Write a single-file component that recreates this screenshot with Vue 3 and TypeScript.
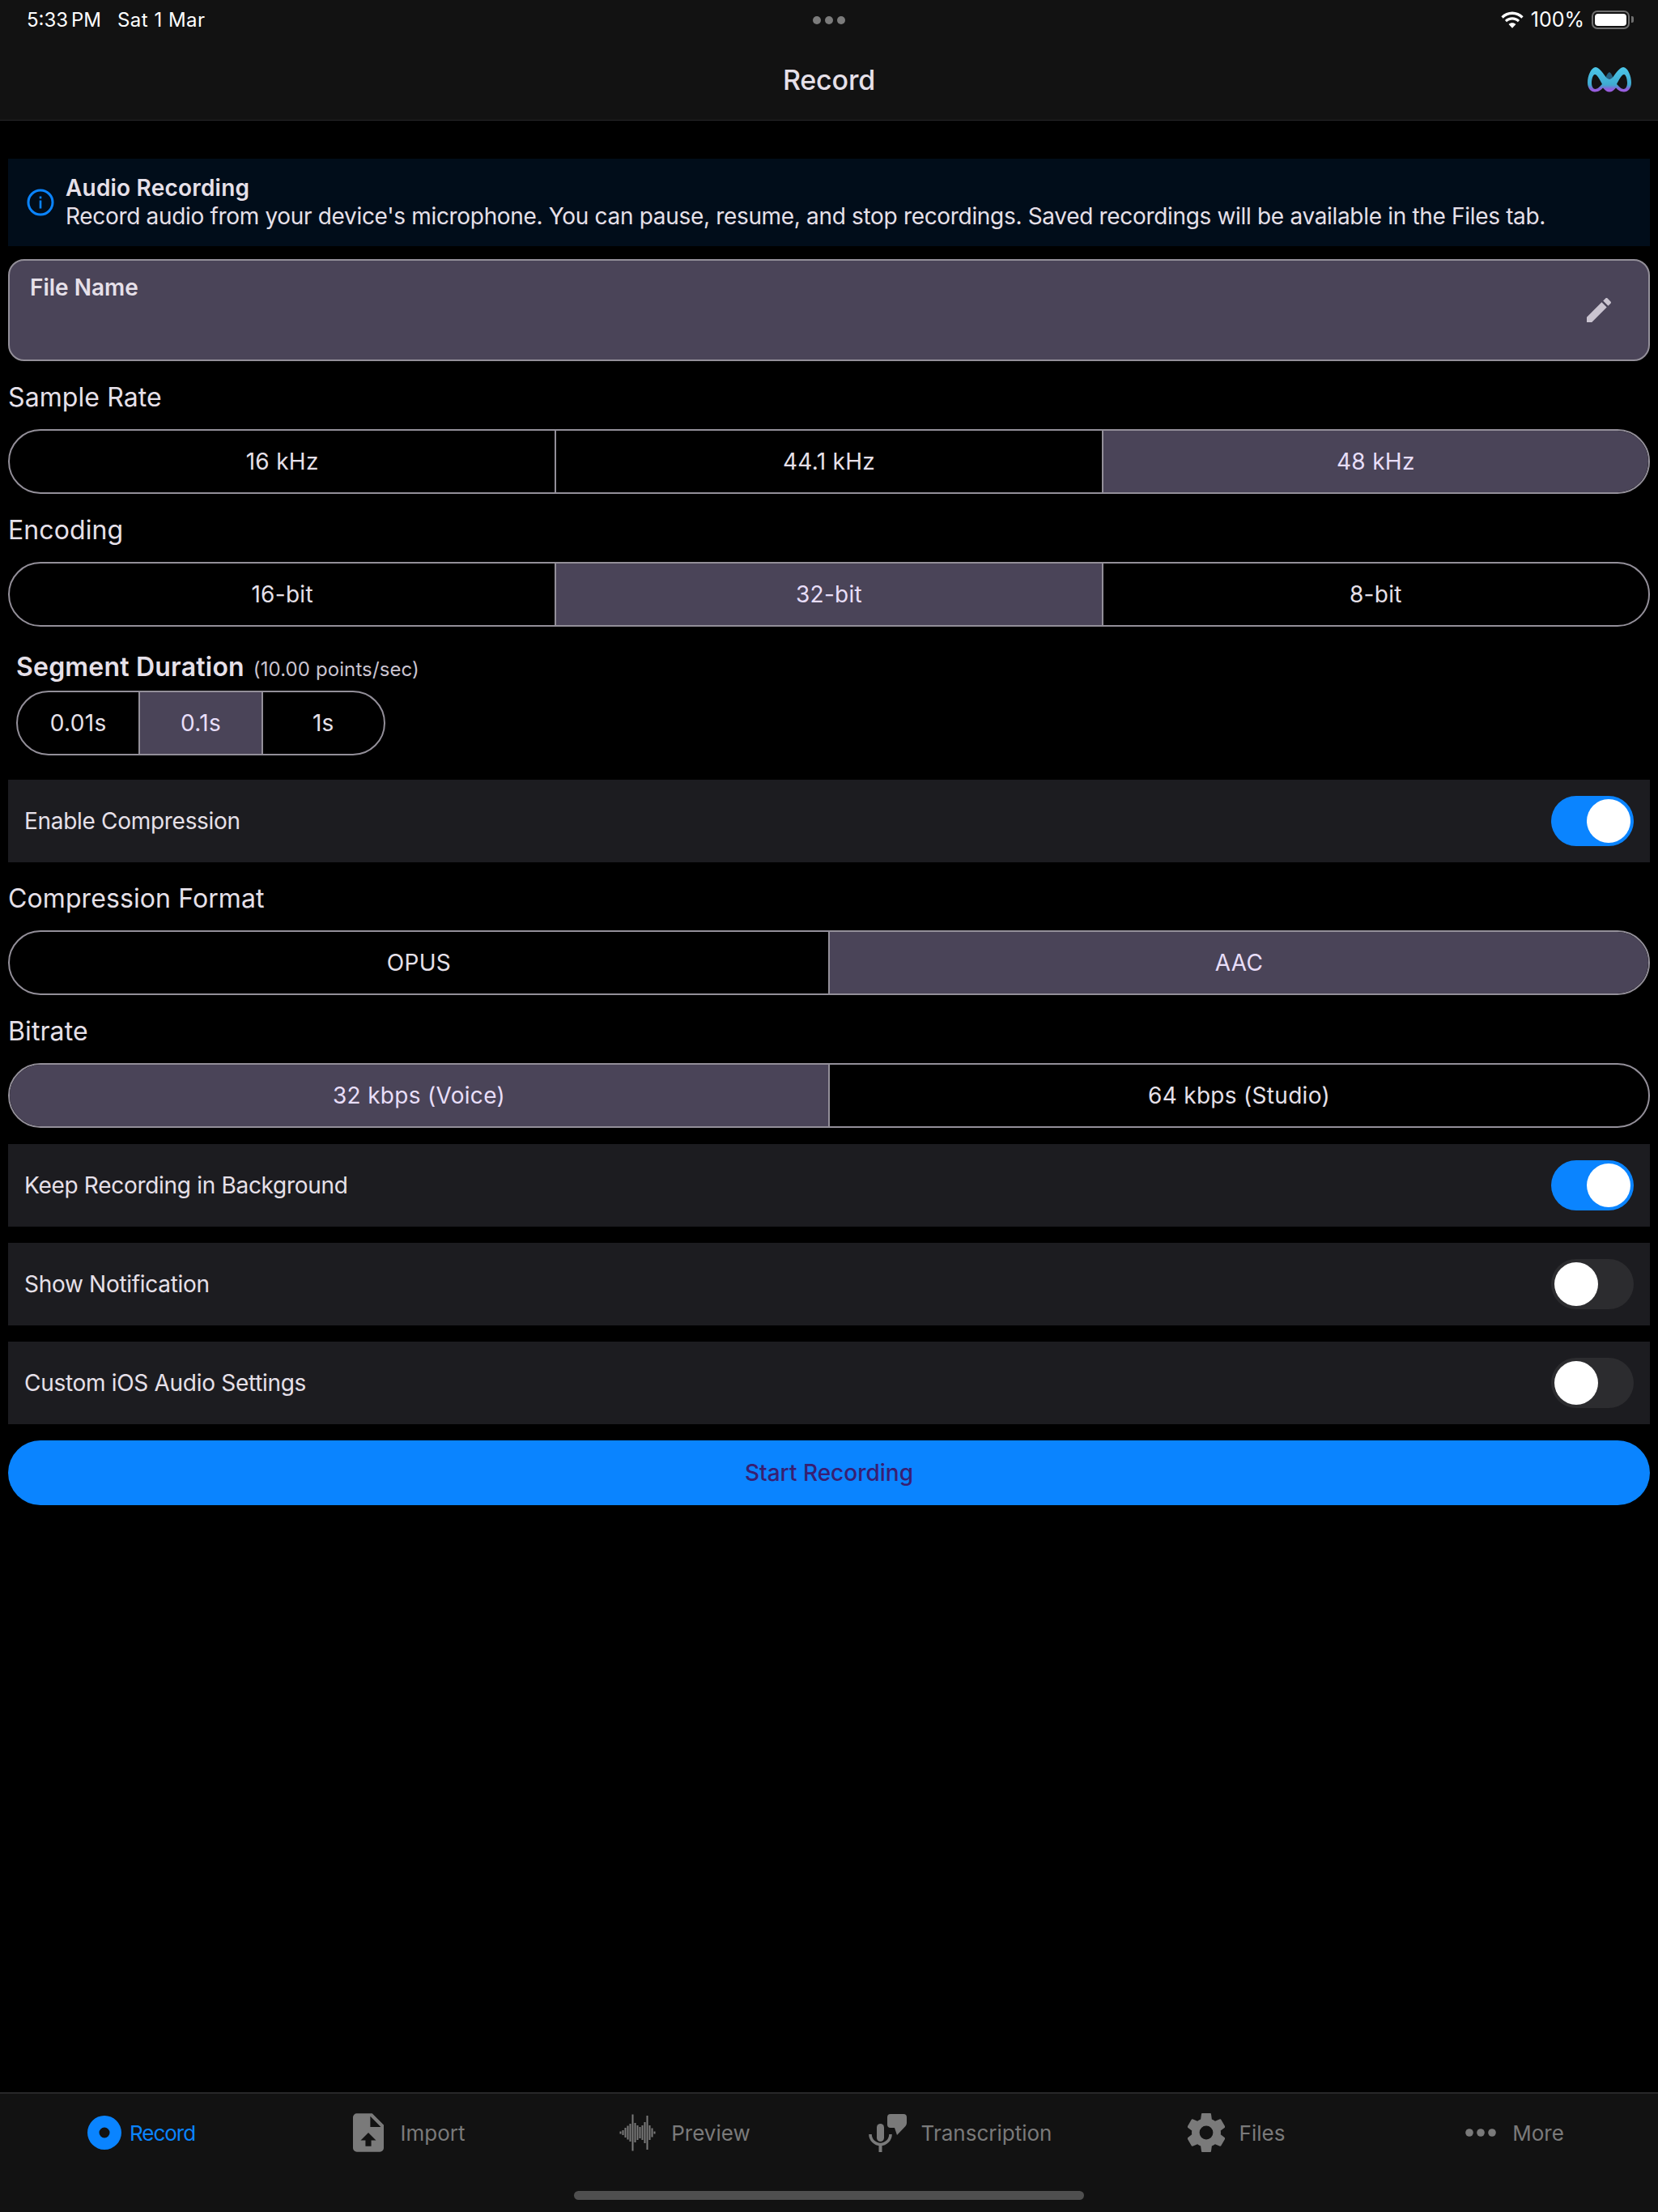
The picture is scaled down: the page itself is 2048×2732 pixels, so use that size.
<template>
  <div class="page">
    <header class="top">
      <div class="status">
        <div class="status-left"><span class="time">5:33 PM</span><span class="date">Sat 1 Mar</span></div>
        <div class="dots"><i></i><i></i><i></i></div>
        <div class="status-right">
          <svg class="wifi" width="28" height="21" viewBox="2 1 24 18.500">
            <path d="M14 4.600c3.900 0 7.400 1.500 10 4l2-2.100C22.800 3.400 18.600 1.500 14 1.500S5.200 3.400 2 6.500l2 2.100c2.600-2.500 6.100-4 10-4z" fill="#fff" />
            <path d="M14 10.300c2.300 0 4.400.9 6 2.400l2-2.100c-2.100-2-5-3.200-8-3.200s-5.900 1.200-8 3.200l2 2.100c1.600-1.500 3.700-2.400 6-2.400z" fill="#fff" />
            <path d="M14 13.500c-1.500 0-2.900.6-3.900 1.600l3.900 4.200 3.900-4.200c-1-1-2.400-1.600-3.900-1.600z" fill="#fff" />
          </svg>
          <span class="pct">100%</span>
          <div class="battery"><div class="battery-fill"></div></div>
          <div class="battery-cap"></div>
        </div>
      </div>
      <div class="nav">
        <span class="nav-title">Record</span>
        <svg class="logo" width="54" height="31" viewBox="0 0 54 31">
          <defs>
            <linearGradient id="lg" x1="0" y1="0" x2="0" y2="1">
              <stop offset="0" stop-color="#4cc8ea" />
              <stop offset="0.72" stop-color="#3fa9d0" />
              <stop offset="0.88" stop-color="#8a5fd8" />
              <stop offset="1" stop-color="#a45fe6" />
            </linearGradient>
          </defs>
          <path d="M27 6C23 9 20 15 24 20c2 2.500 4 2.500 6 0 3-5 1-11-3-14z" fill="#25607f" />
          <path d="M27 13c-1.500 1.500-3 3.500-2 5 1 1 3 .5 4-1s.5-3-2-4z" fill="#2d4468" />
          <path fill="url(#lg)" fill-rule="evenodd" d="M9.500 0C4 1 0 11 0 19c0 7 4 11.500 9 11.500 5 0 8-3 10-5 2.500 3 5 5 8 5s5.500-2 8-5c2 2 5 5 10 5s9-4.500 9-11.500c0-8-4-18-9.500-19C40 0 36 6 31.500 12 29 15.500 25 15.500 22.500 12 18 6 14 0 9.500 0zM9 9C12 9 16 17 18 21 15 24 12 27 9.500 27 7 27 5 24 5 19.500 5 15 6.500 9 9 9zM45 9c2.500 0 4 6 4 10.500S47 27 44.500 27C42 27 39 24 36 21 38 17 42 9 45 9z" />
        </svg>
      </div>
    </header>

    <main class="content">
      <div class="banner">
        <svg class="info" width="34" height="34" viewBox="0 0 34 34">
          <circle cx="17" cy="17" r="15" fill="none" stroke="#0a84ff" stroke-width="3" />
          <rect x="15.700" y="14.500" width="2.600" height="10" fill="#0a84ff" />
          <rect x="15.700" y="9.500" width="2.600" height="2.800" fill="#0a84ff" />
        </svg>
        <div>
          <div class="banner-title">Audio Recording</div>
          <div class="banner-text">Record audio from your device's microphone. You can pause, resume, and stop recordings. Saved recordings will be available in the Files tab.</div>
        </div>
      </div>

      <div class="field">
        <span class="field-label">File Name</span>
        <svg class="pencil" width="40" height="40" viewBox="0 0 24 24">
          <path d="M3 17.250V21h3.750L17.810 9.940l-3.750-3.750L3 17.250zM20.710 7.040c.39-.39.39-1.020 0-1.410l-2.340-2.340c-.39-.39-1.020-.39-1.410 0l-1.830 1.830 3.750 3.750 1.830-1.830z" fill="#cac4d0" />
        </svg>
      </div>

      <div class="label">Sample Rate</div>
      <div class="seg">
        <button v-for="o in sampleRates" :key="o" :class="{ on: o === '48 kHz' }">{{ o }}</button>
      </div>

      <div class="label">Encoding</div>
      <div class="seg">
        <button v-for="o in encodings" :key="o" :class="{ on: o === '32-bit' }">{{ o }}</button>
      </div>

      <div class="duration">
        <div class="duration-head">
          <span class="duration-title">Segment Duration</span>
          <span class="duration-sub">(10.00 points/sec)</span>
        </div>
        <div class="seg small">
          <button v-for="o in durations" :key="o" :class="{ on: o === '0.1s' }">{{ o }}</button>
        </div>
      </div>

      <div class="row">
        <span>Enable Compression</span>
        <div class="toggle on"><div class="knob"></div></div>
      </div>

      <div class="label">Compression Format</div>
      <div class="seg">
        <button>OPUS</button>
        <button class="on">AAC</button>
      </div>

      <div class="label">Bitrate</div>
      <div class="seg">
        <button class="on">32 kbps (Voice)</button>
        <button>64 kbps (Studio)</button>
      </div>

      <div v-for="r in rows" :key="r.label" class="row spaced">
        <span>{{ r.label }}</span>
        <div class="toggle" :class="{ on: r.on }"><div class="knob"></div></div>
      </div>

      <button class="start">Start Recording</button>
    </main>

    <nav class="tabs">
      <div class="tab active">
        <svg width="42" height="42" viewBox="0 0 42 42"><path fill="#0a84ff" fill-rule="evenodd" d="M21 0a21 21 0 1 0 0 42a21 21 0 1 0 0-42zM21 14.500a6.500 6.500 0 1 1 0 13a6.500 6.500 0 1 1 0-13z" /></svg>
        <span>Record</span>
      </div>
      <div class="tab">
        <svg width="38" height="48" viewBox="4 2 16 20"><path fill="#7a7a7a" d="M14,2H6A2,2 0 0,0 4,4V20A2,2 0 0,0 6,22H18A2,2 0 0,0 20,20V8L14,2M13.500,16V19H10.500V16H8L12,12L16,16H13.500M13,9V3.500L18.500,9H13Z" /></svg>
        <span>Import</span>
      </div>
      <div class="tab">
        <svg width="46" height="46" viewBox="0 0 46 46">
          <line v-for="(h, i) in wave" :key="i" :x1="1.500 + i * 3" :x2="1.500 + i * 3" :y1="23 - h / 2" :y2="23 + h / 2" stroke="#7a7a7a" stroke-width="2" />
        </svg>
        <span>Preview</span>
      </div>
      <div class="tab">
        <svg width="47" height="48" viewBox="0 0 47 48">
          <rect x="10" y="13" width="9" height="22" rx="4.500" fill="#7a7a7a" />
          <path d="M2 26a12.500 12.500 0 0 0 25 0" fill="none" stroke="#7a7a7a" stroke-width="3.600" />
          <rect x="12.500" y="38" width="4" height="10" fill="#7a7a7a" />
          <path d="M27 1h16a4 4 0 0 1 4 4v7q0 2-1.500 4L35 27l-3-9h-5a4 4 0 0 1-4-4V5a4 4 0 0 1 4-4z" fill="#7a7a7a" />
        </svg>
        <span>Transcription</span>
      </div>
      <div class="tab">
        <svg width="46" height="48" viewBox="2.400 2 19.200 20"><path fill="#7a7a7a" d="M12,15.500A3.500,3.500 0 0,1 8.500,12A3.500,3.500 0 0,1 12,8.500A3.500,3.500 0 0,1 15.500,12A3.500,3.500 0 0,1 12,15.500M19.430,12.970C19.470,12.650 19.500,12.330 19.500,12C19.500,11.670 19.470,11.340 19.430,11L21.540,9.370C21.730,9.220 21.780,8.950 21.660,8.730L19.660,5.270C19.540,5.050 19.270,4.960 19.050,5.050L16.560,6.050C16.040,5.660 15.500,5.320 14.870,5.070L14.500,2.420C14.460,2.180 14.250,2 14,2H10C9.750,2 9.540,2.180 9.500,2.420L9.130,5.070C8.500,5.320 7.960,5.660 7.440,6.050L4.950,5.050C4.730,4.960 4.460,5.050 4.340,5.270L2.340,8.730C2.210,8.950 2.270,9.220 2.460,9.370L4.570,11C4.530,11.340 4.500,11.670 4.500,12C4.500,12.330 4.530,12.650 4.570,12.970L2.460,14.630C2.270,14.780 2.210,15.050 2.340,15.270L4.340,18.730C4.460,18.950 4.730,19.030 4.950,18.950L7.440,17.940C7.960,18.340 8.500,18.680 9.130,18.930L9.500,21.580C9.540,21.820 9.750,22 10,22H14C14.250,22 14.460,21.820 14.500,21.580L14.870,18.930C15.500,18.670 16.040,18.340 16.560,17.940L19.050,18.950C19.270,19.030 19.540,18.950 19.660,18.730L21.660,15.270C21.780,15.050 21.730,14.780 21.540,14.630L19.430,12.970Z" /></svg>
        <span>Files</span>
      </div>
      <div class="tab">
        <svg width="38" height="12" viewBox="0 0 38 12">
          <circle cx="5" cy="6" r="4.800" fill="#7a7a7a" />
          <circle cx="19" cy="6" r="4.800" fill="#7a7a7a" />
          <circle cx="33" cy="6" r="4.800" fill="#7a7a7a" />
        </svg>
        <span>More</span>
      </div>
      <div class="home"></div>
    </nav>
  </div>
</template>

<script setup lang="ts">
const sampleRates: string[] = ['16 kHz', '44.1 kHz', '48 kHz']
const encodings: string[] = ['16-bit', '32-bit', '8-bit']
const durations: string[] = ['0.01s', '0.1s', '1s']

const rows = [
  { label: 'Keep Recording in Background', on: true },
  { label: 'Show Notification', on: false },
  { label: 'Custom iOS Audio Settings', on: false },
]

// preview tab waveform, bar heights
const wave: number[] = [3, 6, 12, 17, 22, 45, 24, 18, 14, 18, 26, 42, 18, 11, 3]
</script>

<style>
html, body { background: #000; }
</style>

<style scoped>
.page {
  width: 2048px;
  height: 2732px;
  display: flex;
  flex-direction: column;
  background: #000;
  color: #e6e0e9;
  font-family: Inter, "Liberation Sans", sans-serif;
  font-size: 28px;
  overflow: hidden;
}
.top {
  height: 149px;
  box-sizing: border-box;
  background: #121212;
  border-bottom: 1px solid #272729;
  flex: none;
}
.status {
  height: 48px;
  padding: 0 30px 0 33px;
  display: flex;
  align-items: center;
  position: relative;
  color: #fff;
  font-size: 24px;
}
.status-left { display: flex; gap: 20px; }
.time { word-spacing: -3px; }
.date { letter-spacing: 0.5px; }
.dots {
  position: absolute;
  left: 1004px;
  top: 20px;
  display: flex;
  gap: 5px;
}
.dots i {
  width: 10px;
  height: 10px;
  border-radius: 50%;
  background: #7b7b7b;
}
.status-right {
  margin-left: auto;
  display: flex;
  align-items: center;
}
.pct { margin-left: 9px; font-size: 25px; }
.battery {
  width: 47px;
  height: 23px;
  margin-left: 9px;
  box-sizing: border-box;
  padding: 2px;
  border: 2px solid #6f6f6f;
  border-radius: 7px;
}
.battery-fill {
  height: 100%;
  background: #fff;
  border-radius: 4px;
}
.battery-cap {
  width: 3px;
  height: 8px;
  margin-left: 2px;
  background: #6f6f6f;
  border-radius: 0 2px 2px 0;
}
.nav {
  height: 100px;
  display: flex;
  align-items: center;
  justify-content: center;
  position: relative;
}
.nav-title {
  font-size: 34px;
  font-weight: 500;
  letter-spacing: -0.2px;
}
.logo {
  position: absolute;
  right: 33px;
  top: 35px;
}
.content {
  flex: 1;
  padding: 47px 10px 0;
  display: flex;
  flex-direction: column;
}
.banner {
  height: 108px;
  flex: none;
  display: flex;
  align-items: center;
  gap: 14px;
  padding-left: 23px;
  background: #010d1a;
}
.info { flex: none; }
.banner-title { font-weight: 600; line-height: 34px; letter-spacing: 0.2px; }
.banner-text { line-height: 36px; letter-spacing: -0.325px; }
.field {
  height: 126px;
  flex: none;
  margin-top: 16px;
  box-sizing: border-box;
  position: relative;
  background: #4a4458;
  border: 2px solid #938f99;
  border-radius: 20px;
}
.field-label {
  position: absolute;
  left: 25px;
  top: 16px;
  font-weight: 600;
  color: #e6e0e9;
}
.pencil {
  position: absolute;
  right: 41px;
  top: 41px;
}
.label {
  height: 40px;
  line-height: 40px;
  margin: 25px 0 19px;
  font-size: 32px;
  letter-spacing: 0.1px;
}
.seg {
  height: 80px;
  flex: none;
  display: flex;
  box-sizing: border-box;
  border: 2px solid #938f99;
  border-radius: 40px;
  overflow: hidden;
}
.seg button {
  flex: 1;
  background: transparent;
  border: 0;
  border-left: 2px solid #938f99;
  color: #e6e0e9;
  font: inherit;
  letter-spacing: 0.3px;
  padding: 0;
}
.seg button:first-child { border-left: 0; }
.seg button.on {
  background: #4a4458;
  color: #e8def8;
}
.duration {
  padding: 0 10px;
  height: 189px;
  flex: none;
  box-sizing: border-box;
}
.duration-head {
  height: 79px;
  padding-top: 30px;
  box-sizing: border-box;
  display: flex;
  align-items: baseline;
  gap: 11px;
  line-height: 40px;
}
.duration-title { font-size: 32px; font-weight: 600; letter-spacing: 0.2px; }
.duration-sub { font-size: 24px; color: #cac4d0; letter-spacing: 0.1px; }
.seg.small { width: 456px; }
.row {
  height: 102px;
  flex: none;
  display: flex;
  align-items: center;
  justify-content: space-between;
  padding: 0 20px;
  background: #1c1c20;
  letter-spacing: -0.3px;
}
.row.spaced { margin-top: 20px; }
.toggle {
  width: 102px;
  height: 62px;
  box-sizing: border-box;
  padding: 4px;
  border-radius: 31px;
  background: #2c2c2f;
  display: flex;
}
.toggle.on {
  background: #0a84ff;
  justify-content: flex-end;
}
.knob {
  width: 54px;
  height: 54px;
  border-radius: 50%;
  background: #fff;
}
.start {
  height: 80px;
  flex: none;
  margin-top: 20px;
  border: 0;
  border-radius: 40px;
  background: #0a84ff;
  color: #381e72;
  font: inherit;
  font-weight: 500;
}
.tabs {
  height: 148px;
  flex: none;
  box-sizing: border-box;
  display: flex;
  align-items: flex-start;
  position: relative;
  background: #121212;
  border-top: 2px solid #272729;
}
.tab {
  flex: none;
  width: 340px;
  height: 96px;
  box-sizing: border-box;
  display: flex;
  align-items: center;
  justify-content: center;
  gap: 18px;
  color: #7a7a7a;
  font-size: 26px;
}
.tab.active { color: #0a84ff; gap: 10px; padding-left: 9px; letter-spacing: -1px; }
.tab:nth-child(2) { gap: 21px; padding-right: 10px; }
.tab:nth-child(3) { padding-right: 8px; }
.tab:nth-child(4) { padding-right: 8px; }
.tab:nth-child(5) { padding-right: 6px; }
.tab:nth-child(6) { gap: 20px; padding-left: 2px; }
.home {
  position: absolute;
  left: 709px;
  top: 120px;
  width: 630px;
  height: 11px;
  border-radius: 6px;
  background: #4f4f4f;
}
</style>
